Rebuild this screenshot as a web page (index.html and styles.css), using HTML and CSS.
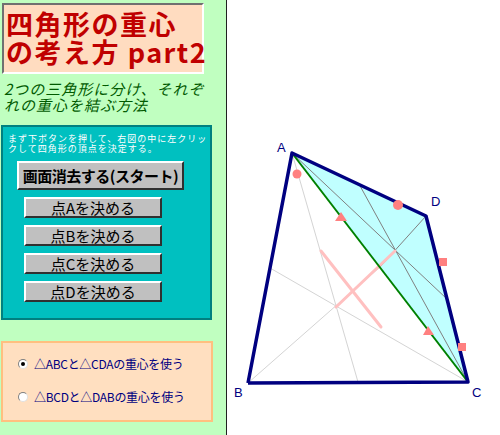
FILE: index.html
```html
<!DOCTYPE html>
<html lang="ja">
<head>
<meta charset="utf-8">
<title>四角形の重心の考え方 part2</title>
<link rel="stylesheet" href="styles.css">
</head>
<body>
<div class="app">
  <div class="side">
    <div class="title">四角形の重心<br>の考え方 part2</div>
    <div class="subtitle">2つの三角形に分け、それぞ<br>れの重心を結ぶ方法</div>
    <div class="ctrl">
      <p class="hint">まず下ボタンを押して、右図の中に左クリッ<br>クして四角形の頂点を決定する。</p>
      <button class="btn btn-start">画面消去する(スタート)</button>
      <button class="btn btn-pt">点Aを決める</button>
      <button class="btn btn-pt">点Bを決める</button>
      <button class="btn btn-pt">点Cを決める</button>
      <button class="btn btn-pt">点Dを決める</button>
    </div>
    <div class="opts">
      <label class="opt"><span class="radio on"></span>△ABCと△CDAの重心を使う</label>
      <label class="opt"><span class="radio"></span>△BCDと△DABの重心を使う</label>
    </div>
  </div>
  <svg class="canvas" viewBox="228 0 272 435" width="272" height="435">
    <polygon points="293,153 427,216 469,382" fill="#c0ffff"/>
    <g stroke="#d4d4d4" stroke-width="1" fill="none">
      <line x1="293" y1="153" x2="359" y2="382"/>
      <line x1="249" y1="383" x2="381" y2="267"/>
      <line x1="469" y1="382" x2="271" y2="268"/>
    </g>
    <g stroke="#808080" stroke-width="1" fill="none">
      <line x1="293" y1="153" x2="448" y2="299"/>
      <line x1="427" y1="216" x2="381" y2="267"/>
      <line x1="469" y1="382" x2="360" y2="184"/>
    </g>
    <g stroke="#ffc0c0" stroke-width="3" fill="none" stroke-linecap="round">
      <line x1="337" y1="307" x2="396" y2="251"/>
      <line x1="322" y1="251" x2="382" y2="327"/>
    </g>
    <line x1="293" y1="153" x2="469" y2="382" stroke="#008000" stroke-width="2"/>
    <g stroke="#000080" stroke-width="3.5" fill="none" stroke-linejoin="round">
      <polyline points="249,383 293,153 427,216 469,382 249,383"/>
    </g>
    <g fill="#ff8080">
      <circle cx="298" cy="174" r="4.5"/>
      <circle cx="399" cy="205" r="5"/>
      <polygon points="342,212 336,221 348,221"/>
      <polygon points="429,326 424,335 435,335"/>
      <rect x="440" y="258" width="8" height="8"/>
      <rect x="459" y="343" width="8" height="8"/>
    </g>
    <g class="lbl">
      <text x="278" y="152">A</text>
      <text x="432" y="206">D</text>
      <text x="235" y="397">B</text>
      <text x="473" y="397">C</text>
    </g>
  </svg>
</div>
</body>
</html>
```

FILE: styles.css
```css
html, body {
  margin: 0;
  padding: 0;
  background: #ffffff;
}
.app {
  display: flex;
  width: 500px;
  height: 435px;
  overflow: hidden;
}
.side {
  width: 227px;
  height: 435px;
  flex: none;
  background: #c0ffc0;
  border-right: 1px solid #202020;
  padding-top: 3px;
  box-sizing: border-box;
  font-family: "Noto Sans CJK JP", sans-serif;
}
.title {
  margin-left: 2px;
  width: 202px;
  height: 71px;
  box-sizing: border-box;
  border: 2px solid;
  border-color: #707070 #ffffff #ffffff #707070;
  background: #ffdcc0;
  color: #c00000;
  font-weight: bold;
  font-size: 27px;
  line-height: 28px;
  letter-spacing: 1.5px;
  padding: 5px 0 0 2px;
  white-space: nowrap;
}
.subtitle {
  margin: 7px 0 0 4px;
  color: #005a00;
  font-style: italic;
  font-size: 15px;
  line-height: 16px;
  letter-spacing: 1px;
  white-space: nowrap;
  height: 38px;
}
.ctrl {
  margin: 6px 0 0 1px;
  width: 211px;
  height: 195px;
  box-sizing: border-box;
  background: #00c0c0;
  border: 2px solid #008080;
  display: flex;
  flex-direction: column;
  align-items: flex-start;
}
.hint {
  margin: 7px 0 0 5px;
  color: #ffffff;
  font-size: 9px;
  line-height: 10px;
  letter-spacing: 1px;
  white-space: nowrap;
}
.btn {
  font-family: "Noto Sans CJK JP", sans-serif;
  background: #c0c0c0;
  border: 2px solid;
  border-color: #ffffff #303030 #303030 #ffffff;
  color: #000000;
  padding: 0;
  margin: 0;
  box-sizing: border-box;
  font-size: 15px;
  line-height: 15px;
  white-space: nowrap;
}
.btn-start {
  margin: 7px 0 0 14px;
  width: 167px;
  height: 29px;
  font-weight: bold;
  letter-spacing: -0.5px;
}
.btn-pt {
  margin: 7px 0 0 21px;
  width: 138px;
  height: 21px;
}
.opts {
  margin: 21px 0 0 1px;
  width: 212px;
  height: 81px;
  box-sizing: border-box;
  background: #ffdfc0;
  border: 2px solid #ffc080;
  display: flex;
  flex-direction: column;
  padding: 13px 0 0 15px;
  gap: 17px;
}
.opt {
  display: flex;
  align-items: center;
  gap: 6px;
  color: #000080;
  font-size: 12px;
  line-height: 16px;
  letter-spacing: -0.3px;
  white-space: nowrap;
}
.radio {
  width: 10px;
  height: 10px;
  box-sizing: border-box;
  border-radius: 50%;
  border: 1px solid;
  border-color: #808080 #e0e0e0 #e0e0e0 #808080;
  background: #ffffff;
  display: flex;
  align-items: center;
  justify-content: center;
}
.radio.on::after {
  content: "";
  width: 4px;
  height: 4px;
  border-radius: 50%;
  background: #000000;
}
.canvas {
  display: block;
  flex: none;
}
.lbl text {
  font-family: "Liberation Sans", sans-serif;
  font-size: 13px;
  fill: #000080;
}
```
